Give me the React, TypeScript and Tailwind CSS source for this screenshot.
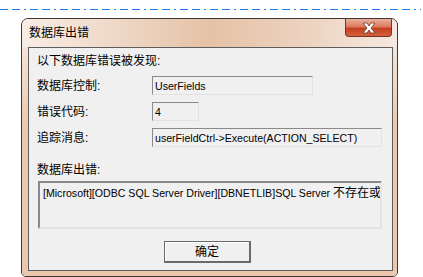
import React from "react";

const FONT = { fontFamily: '"Liberation Sans", "Noto Sans CJK SC", sans-serif' };

function Field({ w, children }: { w: number; children: React.ReactNode }) {
  return (
    <div
      className="h-[19px] bg-[#f0f0f0] border border-t-[#8a8a8a] border-l-[#8a8a8a] border-b-[#e2e2e2] border-r-[#e2e2e2] flex items-center pl-[2px] text-[10.6px] leading-[14px] text-black overflow-hidden whitespace-nowrap"
      style={{ width: w }}
    >
      {children}
    </div>
  );
}

export default function App() {
  return (
    <div className="w-[423px] h-[277px] bg-white overflow-hidden" style={FONT}>
      <svg width="423" height="18" className="block">
        <line x1="0" y1="9.5" x2="421" y2="9.5" stroke="#1a7ae6" strokeWidth="1" strokeDasharray="8 4 8 4 2 4" />
      </svg>
      <div className="ml-[21px] w-[377px] h-[259px] border border-[#3e3732] rounded-t-[7px] rounded-b-[5px] flex flex-col overflow-hidden bg-[#ebc8ad]">
        <div className="h-[28px] flex justify-between bg-[linear-gradient(90deg,#f8ede6_0%,#efd8c7_25%,#e5c2a6_50%,#ecd2bf_75%,#f6e9e0_100%)]">
          <div className="pl-[7px] pt-[7px] text-[12px] leading-[14px] text-black">数据库出错</div>
          <div className="mr-[5px] w-[47px] h-[18px] rounded-b-[4px] border border-t-0 border-[#7a3522] bg-[linear-gradient(180deg,#eab29e_0%,#dc7a5e_45%,#c4401f_55%,#d4603d_100%)] flex items-center justify-center">
            <svg width="16" height="12" viewBox="0 0 16 12">
              <path d="M2 1 H6 L8 4 L10 1 H14 L10 6 L14 11 H10 L8 8 L6 11 H2 L6 6 Z" fill="#ffffff" stroke="#6b3a2e" strokeWidth="0.8" strokeLinejoin="round" />
            </svg>
          </div>
        </div>
        <div className="flex-1 pl-[6px] pr-[4px] pb-[5px] bg-[linear-gradient(180deg,#f4e4d8_0%,#ebc8ad_35%,#ebc8ad_100%)]">
          <div className="h-full border border-[#5e5e5e] bg-[#f0f0f0] px-[8px] pt-[6px] flex flex-col text-[12px] text-black">
            <div className="h-[14px] leading-[14px]">以下数据库错误被发现:</div>
            <div className="mt-[8px] flex items-center">
              <div className="w-[115px] leading-[14px]">数据库控制:</div>
              <Field w={161}>UserFields</Field>
            </div>
            <div className="mt-[7px] flex items-center">
              <div className="w-[115px] leading-[14px]">错误代码:</div>
              <Field w={47}>4</Field>
            </div>
            <div className="mt-[7px] flex items-center">
              <div className="w-[115px] leading-[14px]">追踪消息:</div>
              <Field w={230}>userFieldCtrl-&gt;Execute(ACTION_SELECT)</Field>
            </div>
            <div className="mt-[16px] h-[14px] leading-[14px]">数据库出错:</div>
            <div className="mt-[4px] ml-[1px] w-[344px] h-[48px] border-2 border-t-[#8a8a8a] border-l-[#8a8a8a] border-b-[#e4e4e4] border-r-[#e4e4e4] pl-[3px] pr-[2px] pt-[2px] overflow-hidden whitespace-nowrap text-[10.6px] leading-[16px]">
              [Microsoft][ODBC SQL Server Driver][DBNETLIB]SQL Server <span className="text-[12px]">不存在或</span>
            </div>
            <div className="mt-[12px] ml-[127px] w-[87px] h-[22px] border border-[#6a6a6a] border-b-2 border-r-2 bg-[#f0f0f0] shadow-[inset_1px_1px_0_#ffffff] flex items-center justify-center leading-[14px]">
              确定
            </div>
          </div>
        </div>
      </div>
    </div>
  );
}
